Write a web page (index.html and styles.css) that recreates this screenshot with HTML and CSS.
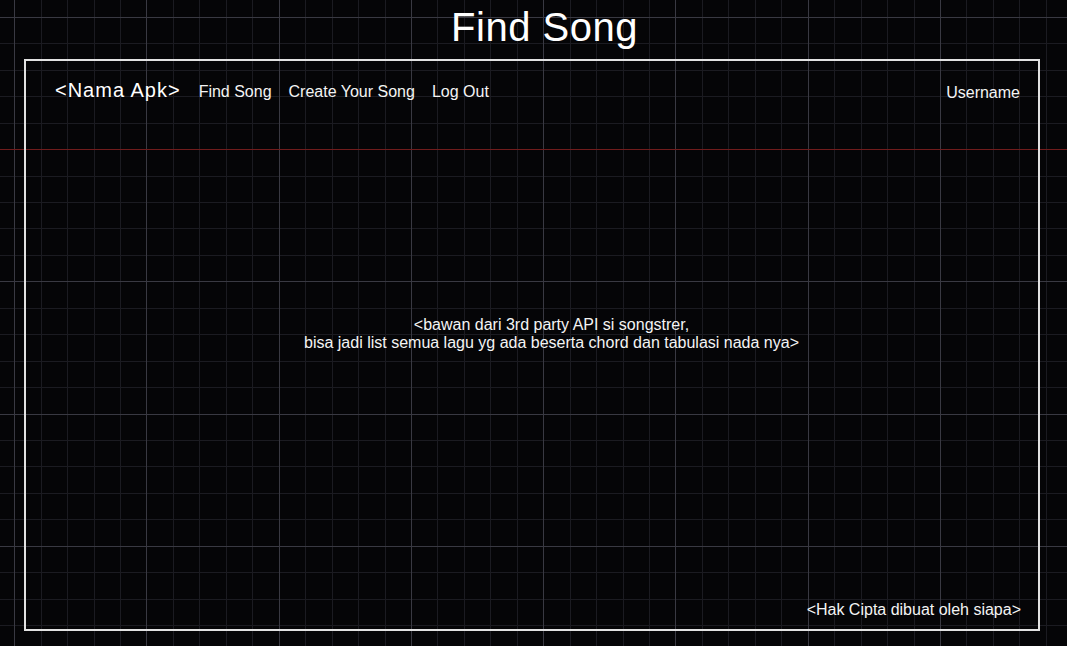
FILE: index.html
```html
<!DOCTYPE html>
<html lang="id">
<head>
<meta charset="utf-8">
<title>Find Song</title>
<link rel="stylesheet" href="styles.css">
</head>
<body>
  <div class="canvas">
    <div class="guide"></div>
    <h1 class="page-title">Find Song</h1>
    <div class="frame">
      <nav class="nav">
        <div class="nav-left">
          <span class="brand">&lt;Nama Apk&gt;</span>
          <a class="nav-link">Find Song</a>
          <a class="nav-link">Create Your Song</a>
          <a class="nav-link">Log Out</a>
        </div>
        <span class="user">Username</span>
      </nav>
      <main class="content">
        <p class="placeholder">&lt;bawan dari 3rd party API si songstrer,<br>bisa jadi list semua lagu yg ada beserta chord dan tabulasi nada nya&gt;</p>
      </main>
      <footer class="footer">&lt;Hak Cipta dibuat oleh siapa&gt;</footer>
    </div>
  </div>
</body>
</html>
```
FILE: styles.css
```css
html, body {
  margin: 0;
  padding: 0;
  height: 100%;
}

body {
  background-color: #050507;
  font-family: "Liberation Sans", Arial, sans-serif;
  color: #ffffff;
  overflow: hidden;
}

.canvas {
  position: relative;
  height: 646px;
  background-color: #050507;
  background-image:
    repeating-linear-gradient(to right, transparent 0 14.2px, #393942 14.2px 15.2px, transparent 15.2px 132.25px),
    repeating-linear-gradient(to bottom, transparent 0 16.8px, #393942 16.8px 17.8px, transparent 17.8px 132.25px),
    repeating-linear-gradient(to right, transparent 0 14.2px, #1b1b21 14.2px 15.2px, transparent 15.2px 26.45px),
    repeating-linear-gradient(to bottom, transparent 0 16.8px, #1b1b21 16.8px 17.8px, transparent 17.8px 26.45px);
  display: flex;
  flex-direction: column;
}

/* red guide line across the drawing canvas */
.guide {
  position: absolute;
  left: 0;
  right: 0;
  top: 149px;
  height: 1px;
  background-color: #701c1c;
}

.page-title {
  margin: 0 0 8px 0;
  padding: 3px 0 0 22px;
  font-size: 40px;
  line-height: 48px;
  font-weight: normal;
  letter-spacing: 0.5px;
  text-align: center;
  color: #ffffff;
}

.frame {
  position: relative;
  margin: 0 27px 0 24px;
  height: 572px;
  box-sizing: border-box;
  border: 2px solid #e2e2e2;
  display: flex;
  flex-direction: column;
}

.nav {
  display: flex;
  justify-content: space-between;
  align-items: flex-start;
  padding: 17px 18px 0 29px;
}

.nav-left {
  display: flex;
  align-items: baseline;
  gap: 17px;
}

.brand {
  font-size: 20px;
  line-height: 24px;
  letter-spacing: 1px;
  color: #ffffff;
  margin-right: 1px;
}

.nav-link {
  font-size: 16px;
  line-height: 20px;
  color: #f4f4f4;
}

.user {
  margin-top: 5px;
  font-size: 16px;
  line-height: 20px;
  color: #f4f4f4;
}

.content {
  flex: 1;
  display: flex;
  align-items: center;
  justify-content: center;
  padding: 0 0 37px 39px;
}

.placeholder {
  margin: 0;
  font-size: 16px;
  line-height: 18px;
  text-align: center;
  color: #f4f4f4;
}

.footer {
  padding: 0 17px 10px 0;
  font-size: 16px;
  line-height: 18px;
  text-align: right;
  color: #f4f4f4;
}
```
